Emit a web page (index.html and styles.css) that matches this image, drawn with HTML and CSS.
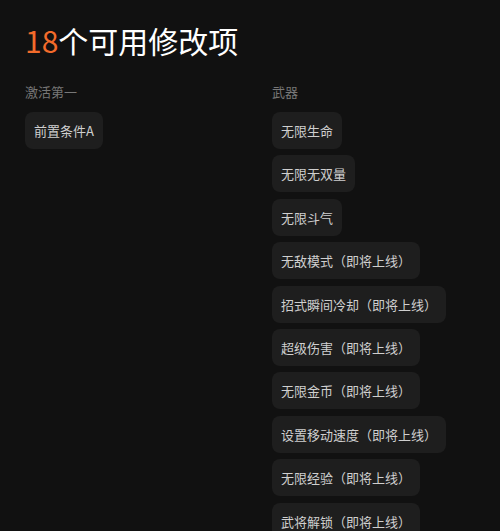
FILE: index.html
```html
<!DOCTYPE html>
<html lang="zh-CN">
<head>
<meta charset="utf-8">
<link rel="stylesheet" href="styles.css">
</head>
<body>
<div class="page">
  <h1 class="title"><span class="count">18</span>个可用修改项</h1>
  <div class="columns">
    <section class="group">
      <div class="group-label">激活第一</div>
      <div class="chips">
        <div class="chip">前置条件A</div>
      </div>
    </section>
    <section class="group">
      <div class="group-label">武器</div>
      <div class="chips">
        <div class="chip">无限生命</div>
        <div class="chip">无限无双量</div>
        <div class="chip">无限斗气</div>
        <div class="chip">无敌模式（即将上线）</div>
        <div class="chip">招式瞬间冷却（即将上线）</div>
        <div class="chip">超级伤害（即将上线）</div>
        <div class="chip">无限金币（即将上线）</div>
        <div class="chip">设置移动速度（即将上线）</div>
        <div class="chip">无限经验（即将上线）</div>
        <div class="chip">武将解锁（即将上线）</div>
      </div>
    </section>
  </div>
</div>
</body>
</html>
```

FILE: styles.css
```css
html, body {
  margin: 0;
  padding: 0;
  background: #111111;
  height: 100%;
  overflow: hidden;
}
body {
  font-family: "Noto Sans CJK SC", "Noto Sans", sans-serif;
  color: #cccccc;
}
.page {
  padding: 20px 25px 0 25px;
}
.title {
  margin: 0;
  font-size: 30px;
  line-height: 40px;
  font-weight: 400;
  color: #ffffff;
}
.count {
  color: #f36b2b;
}
.columns {
  display: grid;
  grid-template-columns: 247px 1fr;
  margin-top: 23px;
}
.group-label {
  font-size: 13px;
  line-height: 18px;
  color: #777777;
  margin-bottom: 11px;
}
.chips {
  display: flex;
  flex-direction: column;
  align-items: flex-start;
  gap: 6.4px;
}
.chip {
  background: #1e1e1e;
  border-radius: 8px;
  padding: 9px 9px;
  font-size: 13px;
  line-height: 19px;
  color: #cfcfcf;
}
```
